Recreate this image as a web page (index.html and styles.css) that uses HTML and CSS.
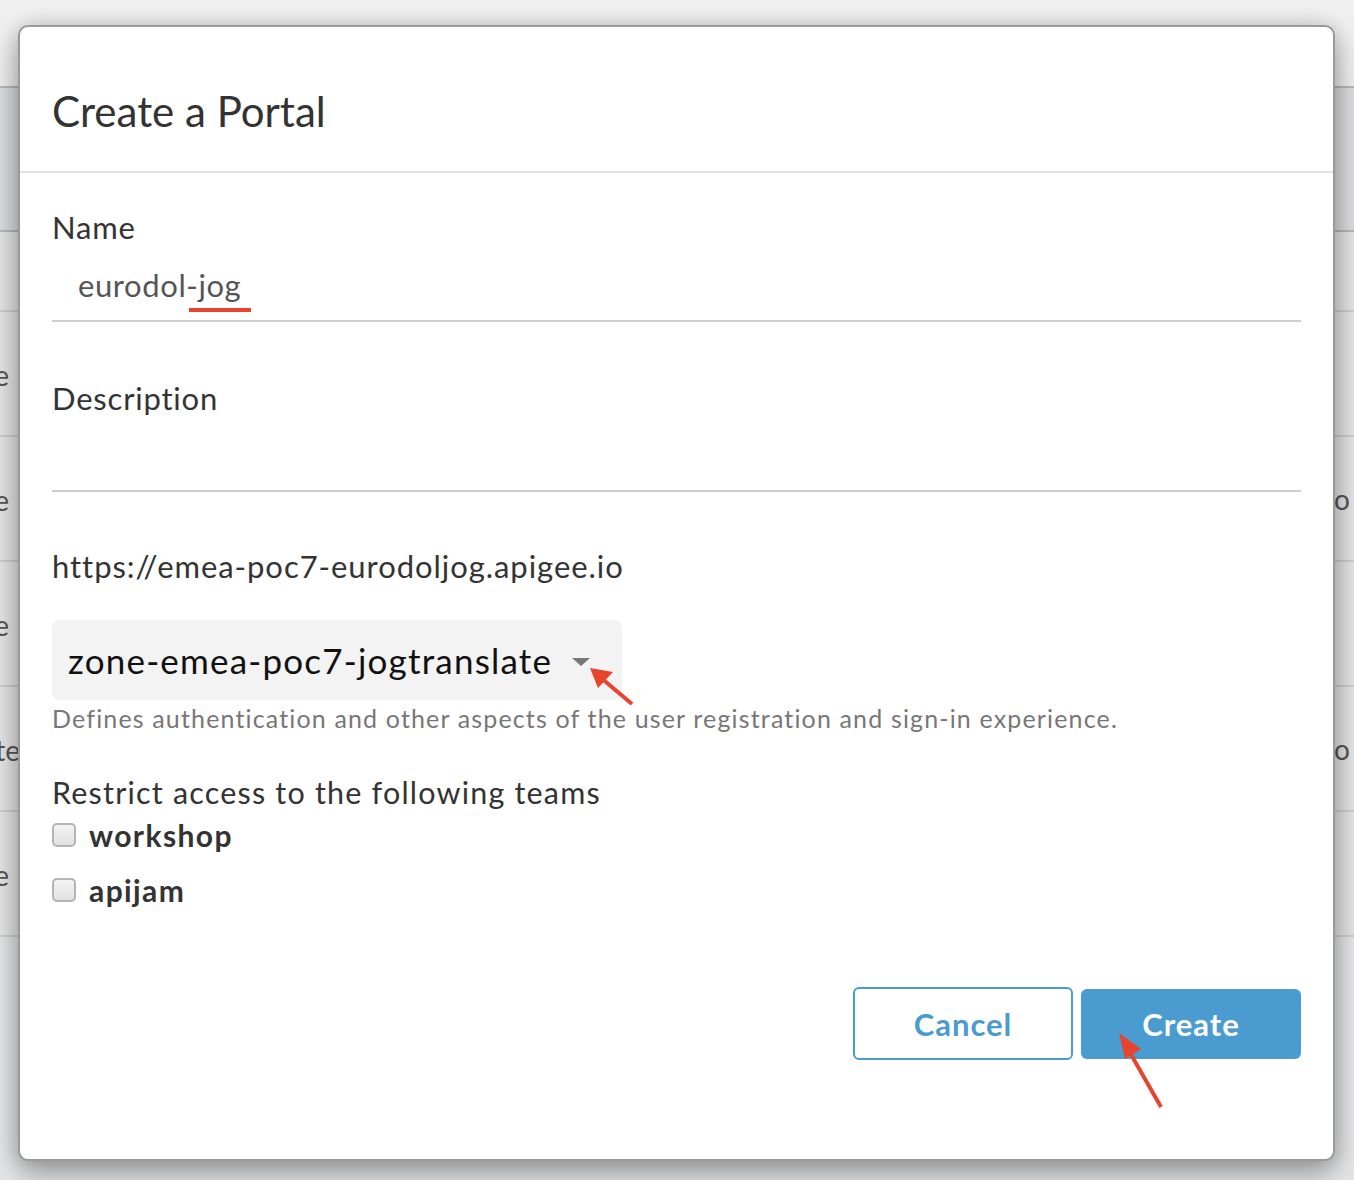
FILE: index.html
```html
<!DOCTYPE html>
<html>
<head>
<meta charset="utf-8">
<link rel="stylesheet" href="styles.css">
</head>
<body>
<div class="page">
  <div class="band top"></div>
  <div class="band head"></div>
  <div class="row short"></div>
  <div class="row"><span class="lcell">e</span><span class="rcell"></span></div>
  <div class="row"><span class="lcell">e</span><span class="rcell">o</span></div>
  <div class="row"><span class="lcell">e</span><span class="rcell"></span></div>
  <div class="row"><span class="lcell wide">te</span><span class="rcell">o</span></div>
  <div class="row"><span class="lcell">e</span><span class="rcell"></span></div>
</div>

<div class="modal">
  <div class="modal-header">
    <h1 class="title">Create a Portal</h1>
  </div>
  <div class="modal-body">
    <div class="field">
      <label class="label">Name</label>
      <div class="input"><span class="value">eurodol<span class="mark">-jog</span></span></div>
    </div>
    <div class="field desc">
      <label class="label">Description</label>
      <div class="input empty"></div>
    </div>
    <div class="url">https://emea-poc7-eurodoljog.apigee.io</div>
    <div class="select-wrap">
      <div class="select">
        <span class="select-text">zone-emea-poc7-jogtranslate</span>
        <span class="caret"></span>
      </div>
      <svg class="arrow arrow-select" width="60" height="50" viewBox="0 0 60 50">
        <line x1="46" y1="46" x2="14" y2="19" stroke="#e8432d" stroke-width="4"/>
        <polygon points="4,10 27,14 12,30" fill="#e8432d"/>
      </svg>
    </div>
    <div class="help">Defines authentication and other aspects of the user registration and sign-in experience.</div>
    <div class="teams">
      <div class="teams-label">Restrict access to the following teams</div>
      <label class="check first"><span class="box"></span><span class="check-text">workshop</span></label>
      <label class="check"><span class="box"></span><span class="check-text">apijam</span></label>
    </div>
    <div class="actions">
      <button class="btn cancel">Cancel</button>
      <button class="btn create">Create
        <svg class="arrow arrow-create" width="60" height="90" viewBox="0 0 60 90">
          <line x1="44" y1="80" x2="12" y2="24" stroke="#e8432d" stroke-width="4"/>
          <polygon points="2,6 24,22 8,32" fill="#e8432d"/>
        </svg>
      </button>
    </div>
  </div>
</div>
</body>
</html>
```

FILE: styles.css
```css
* { box-sizing: border-box; }
html, body { margin: 0; padding: 0; }
body {
  width: 1354px;
  height: 1180px;
  overflow: hidden;
  background: #e6e7e8;
  font-family: Lato, "Noto Sans", sans-serif;
  position: relative;
}
.page {
  display: flex;
  flex-direction: column;
}
.band.top { height: 88px; background: #f0f0f0; border-bottom: 2px solid #b9b9b9; }
.band.head { height: 144px; background: #dcdee1; border-bottom: 2px solid #b9b9b9; }
.row {
  height: 125px;
  border-bottom: 2px solid #cfcfcf;
  display: flex;
  justify-content: space-between;
  align-items: center;
  font-size: 28px;
  color: #555;
  background: #e6e6e6;
}
.row.short { height: 80px; }
.lcell {
  display: flex;
  justify-content: flex-end;
  width: 9px;
  white-space: nowrap;
  padding-top: 2px;
}
.lcell.wide { width: 20px; }
.rcell { width: 30px; padding-left: 10px; }

.modal {
  position: absolute;
  left: 18px;
  top: 25px;
  width: 1317px;
  height: 1136px;
  background: #fff;
  border: 2px solid #9a9a9a;
  border-radius: 10px;
  box-shadow: 0 12px 30px rgba(0,0,0,0.35), 0 0 20px rgba(0,0,0,0.12);
  display: flex;
  flex-direction: column;
}
.modal-header {
  height: 146px;
  border-bottom: 2px solid #e3e3e3;
  padding: 0 32px;
  display: flex;
  align-items: center;
}
.title {
  margin: 0;
  font-weight: 400;
  font-size: 42px;
  color: #333;
  padding-top: 24px;
}
.modal-body {
  padding: 0 32px;
  display: flex;
  flex-direction: column;
}
.field { padding-top: 36px; }
.label {
  display: block;
  font-size: 31px;
  color: #333;
  line-height: 36px;
  letter-spacing: 0.8px;
}
.input {
  height: 77px;
  border-bottom: 2px solid #cfcfcf;
  padding-left: 26px;
  padding-top: 22px;
  font-size: 31px;
  color: #555;
  line-height: 36px;
}
.value { letter-spacing: 0.6px; }
.mark {
  position: relative;
}
.mark::after {
  content: "";
  position: absolute;
  left: 3px;
  right: -10px;
  bottom: -8px;
  height: 4px;
  background: #e8432d;
}
.field.desc { padding-top: 58px; }
.input.empty { height: 76px; }
.url {
  margin-top: 56px;
  font-size: 31px;
  color: #333;
  line-height: 36px;
  letter-spacing: 0.95px;
}
.select-wrap {
  position: relative;
  margin-top: 36px;
  width: 570px;
}
.select {
  height: 80px;
  width: 570px;
  background: #f3f3f3;
  border-radius: 8px;
  display: flex;
  align-items: center;
  padding-left: 16px;
}
.select-text {
  font-size: 35px;
  color: #111;
  letter-spacing: 1.2px;
}
.caret {
  margin-left: 20px;
  margin-top: 4px;
  width: 0;
  height: 0;
  border-left: 9px solid transparent;
  border-right: 9px solid transparent;
  border-top: 8px solid #777;
}
.arrow { position: absolute; pointer-events: none; }
.arrow-select { left: 534px; top: 38px; }
.help {
  margin-top: 0;
  font-size: 25px;
  color: #777;
  line-height: 36px;
  letter-spacing: 1.15px;
}
.teams { margin-top: 39px; display: flex; flex-direction: column; }
.teams-label {
  font-size: 30.5px;
  color: #333;
  line-height: 34px;
  letter-spacing: 1.2px;
}
.check {
  display: flex;
  align-items: center;
  height: 55px;
}
.check.first { margin-top: -2px; }
.box {
  width: 24px;
  height: 24px;
  border: 2px solid #b5b5b5;
  border-radius: 5px;
  background: linear-gradient(#f4f4f4, #e0e0e0);
  margin-right: 13px;
}
.check-text {
  font-size: 30px;
  font-weight: 700;
  color: #333;
  letter-spacing: 1.4px;
}
.actions {
  margin-top: 70px;
  display: flex;
  justify-content: flex-end;
  gap: 8px;
  align-items: center;
}
.btn {
  position: relative;
  width: 220px;
  height: 73px;
  border-radius: 6px;
  font-family: Lato, "Noto Sans", sans-serif;
  font-size: 31px;
  font-weight: 700;
  letter-spacing: 1px;
}
.btn.cancel {
  background: #fff;
  border: 2px solid #4a9bd0;
  color: #4a9bd0;
}
.btn.create {
  background: #4a9bd0;
  border: none;
  color: #fff;
  height: 70px;
}
.arrow-create { left: 36px; top: 38px; }
```
